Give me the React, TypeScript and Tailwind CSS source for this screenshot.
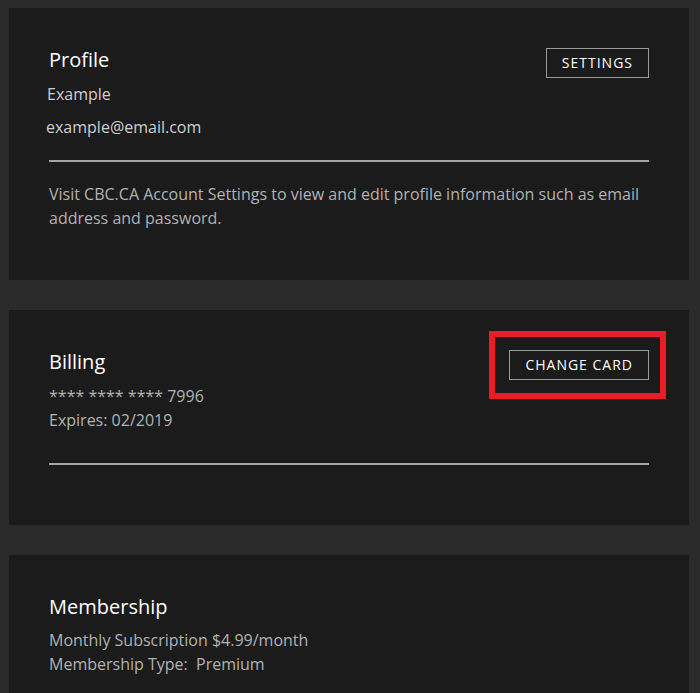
import React from 'react';

const font = { fontFamily: '"Open Sans", "Noto Sans", sans-serif' };

interface OutlineButtonProps {
    label: string;
    highlighted?: boolean;
}

const OutlineButton: React.FC<OutlineButtonProps> = ({ label, highlighted }) => (
    <div className="relative shrink-0">
        <button className="border border-[#9a9a9a] px-[15px] text-[14px] leading-[28px] tracking-[1px] text-white uppercase">
            {label}
        </button>
        {/* annotation box around the button */}
        {highlighted && (
            <div className="pointer-events-none absolute top-[-19px] left-[-20px] right-[-17px] bottom-[-19px] border-[6px] border-[#ed1c24]" />
        )}
    </div>
);

const Divider: React.FC<{ className?: string }> = ({ className = '' }) => (
    <div className={`h-[2px] bg-[#a3a3a3] ${className}`} />
);

export default function App() {
    return (
        <div style={font} className="min-h-[693px] bg-[#2a2a2a] pt-[8px] pl-[9px] pr-[11px] flex flex-col gap-[30px]">
            {/* Profile */}
            <section className="bg-[#1b1b1b] px-[40px] pt-[40px] pb-[50px]">
                <div className="flex items-start justify-between">
                    <h2 className="text-[20px] leading-[24px] text-white">Profile</h2>
                    <OutlineButton label="Settings" />
                </div>
                <p className="mt-[4px] ml-[-2px] text-[16px] leading-[24px] text-[#cfcfcf]">Example</p>
                <p className="mt-[9px] ml-[-3px] text-[16px] leading-[24px] text-[#cfcfcf]">example@email.com</p>
                <Divider className="mt-[21px]" />
                <p className="mt-[20px] text-[16px] leading-[24px] text-[#b2b2b2]">
                    Visit CBC.CA Account Settings to view and edit profile information such as email address and password.
                </p>
            </section>

            {/* Billing */}
            <section className="bg-[#1b1b1b] px-[40px] pt-[40px] pb-[60px]">
                <div className="flex items-start justify-between">
                    <h2 className="text-[20px] leading-[24px] text-white">Billing</h2>
                    <OutlineButton label="Change Card" highlighted />
                </div>
                <div className="mt-[4px] text-[16px] leading-[24px] text-[#b2b2b2]">
                    <p>**** **** **** 7996</p>
                    <p>Expires: 02/2019</p>
                </div>
                <Divider className="mt-[31px]" />
            </section>

            {/* Membership */}
            <section className="bg-[#1b1b1b] px-[40px] pt-[40px] pb-[60px]">
                <h2 className="text-[20px] leading-[24px] text-white">Membership</h2>
                <div className="mt-[9px] text-[16px] leading-[24px] text-[#b2b2b2]">
                    <p>Monthly Subscription $4.99/month</p>
                    <p className="whitespace-pre">Membership Type:  Premium</p>
                </div>
            </section>
        </div>
    );
}
